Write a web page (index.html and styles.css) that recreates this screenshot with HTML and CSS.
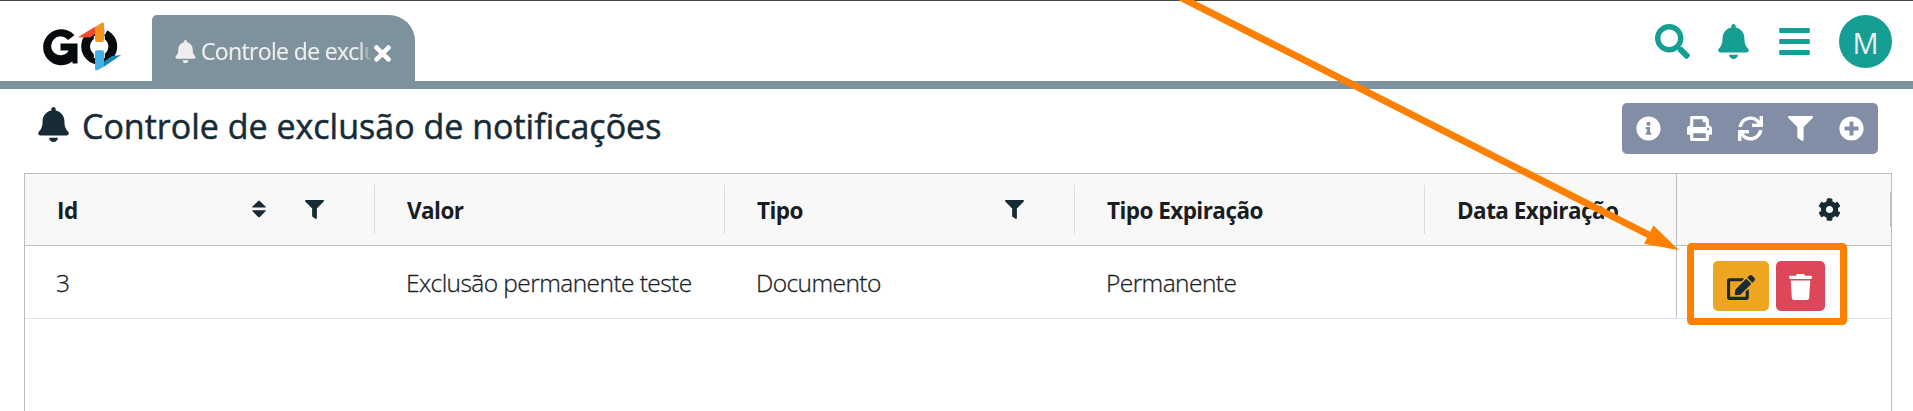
FILE: index.html
```html
<!DOCTYPE html>
<html lang="pt-BR">
<head>
<meta charset="utf-8">
<title>Controle de exclusão de notificações</title>
<link rel="stylesheet" href="styles.css">
</head>
<body>
<svg class="sprite" aria-hidden="true">
  <symbol id="bell" viewBox="0 0 448 512"><path d="M224 512c35.32 0 63.97-28.65 63.97-64H160.03c0 35.35 28.65 64 63.97 64zm215.39-149.71c-19.32-20.76-55.47-51.99-55.47-154.29 0-77.7-54.48-139.9-127.94-155.16V32c0-17.67-14.32-32-31.98-32s-31.98 14.33-31.98 32v20.84C118.56 68.1 64.08 130.3 64.08 208c0 102.3-36.15 133.53-55.47 154.29-6 6.45-8.66 14.16-8.61 21.71.11 16.4 12.98 32 32.1 32h383.8c19.12 0 32-15.6 32.1-32 .05-7.55-2.61-15.27-8.61-21.71z"/></symbol>
  <symbol id="filter" viewBox="0 0 512 512"><path d="M487.976 0H24.028C2.71 0-8.047 25.866 7.058 40.971L192 225.941V432c0 7.831 3.821 15.17 10.237 19.662l80 55.98C298.02 518.69 320 507.493 320 487.98V225.941l184.947-184.97C520.021 25.896 509.338 0 487.976 0z"/></symbol>
  <symbol id="info" viewBox="0 0 512 512"><path d="M256 8C119.043 8 8 119.083 8 256c0 136.997 111.043 248 248 248s248-111.003 248-248C504 119.083 392.957 8 256 8zm0 110c23.196 0 42 18.804 42 42s-18.804 42-42 42-42-18.804-42-42 18.804-42 42-42zm56 254c0 6.627-5.373 12-12 12h-88c-6.627 0-12-5.373-12-12v-24c0-6.627 5.373-12 12-12h12v-64h-12c-6.627 0-12-5.373-12-12v-24c0-6.627 5.373-12 12-12h64c6.627 0 12 5.373 12 12v100h12c6.627 0 12 5.373 12 12v24z"/></symbol>
  <symbol id="plus" viewBox="0 0 512 512"><path d="M256 8C119 8 8 119 8 256s111 248 248 248 248-111 248-248S393 8 256 8zm144 276c0 6.6-5.4 12-12 12h-92v92c0 6.6-5.4 12-12 12h-56c-6.6 0-12-5.4-12-12v-92h-92c-6.6 0-12-5.4-12-12v-56c0-6.6 5.4-12 12-12h92v-92c0-6.6 5.4-12 12-12h56c6.6 0 12 5.4 12 12v92h92c6.6 0 12 5.4 12 12v56z"/></symbol>
  <symbol id="print" viewBox="0 0 512 512"><path d="M448 192V77.25c0-8.49-3.37-16.62-9.37-22.63L393.37 9.37c-6-6-14.14-9.37-22.63-9.37H96C78.33 0 64 14.33 64 32v160c-35.35 0-64 28.65-64 64v112c0 8.84 7.16 16 16 16h48v96c0 17.67 14.33 32 32 32h320c17.67 0 32-14.33 32-32v-96h48c8.84 0 16-7.16 16-16V256c0-35.35-28.65-64-64-64zm-64 256H128v-96h256v96zm0-224H128V64h192v48c0 8.84 7.16 16 16 16h48v96zm48 72c-13.25 0-24-10.75-24-24 0-13.26 10.75-24 24-24s24 10.74 24 24c0 13.25-10.75 24-24 24z"/></symbol>
  <symbol id="sync" viewBox="0 0 512 512"><path d="M440.65 12.57l4 82.77A247.16 247.16 0 0 0 255.83 8C134.73 8 33.91 94.92 12.29 209.82A12 12 0 0 0 24.09 224h49.05a12 12 0 0 0 11.67-9.26 175.91 175.91 0 0 1 317-56.94l-101.46-4.86a12 12 0 0 0-12.57 12v47.41a12 12 0 0 0 12 12H500a12 12 0 0 0 12-12V12a12 12 0 0 0-12-12h-47.37a12 12 0 0 0-11.98 12.57zM255.83 432a175.61 175.61 0 0 1-146-77.8l101.8 4.87a12 12 0 0 0 12.57-12v-47.4a12 12 0 0 0-12-12H12a12 12 0 0 0-12 12V500a12 12 0 0 0 12 12h47.35a12 12 0 0 0 12-12.6l-4.15-82.57A247.17 247.17 0 0 0 255.83 504c121.11 0 221.93-86.92 243.55-201.82a12 12 0 0 0-11.8-14.18h-49.05a12 12 0 0 0-11.67 9.26A175.86 175.86 0 0 1 255.83 432z"/></symbol>
  <symbol id="search" viewBox="0 0 512 512"><path d="M505 442.7L405.3 343c-4.5-4.5-10.6-7-17-7H372c27.6-35.3 44-79.7 44-128C416 93.1 322.9 0 208 0S0 93.1 0 208s93.1 208 208 208c48.3 0 92.7-16.4 128-44v16.3c0 6.4 2.5 12.5 7 17l99.7 99.7c9.4 9.4 24.6 9.4 33.9 0l28.3-28.3c9.4-9.4 9.4-24.6.1-34zM208 336c-70.7 0-128-57.2-128-128 0-70.7 57.2-128 128-128 70.7 0 128 57.2 128 128 0 70.7-57.2 128-128 128z"/></symbol>
  <symbol id="bars" viewBox="0 0 448 512"><rect y="60" width="448" height="72" rx="14"/><rect y="220" width="448" height="72" rx="14"/><rect y="380" width="448" height="72" rx="14"/></symbol>
  <symbol id="times" viewBox="0 80 352 352"><path d="M242.72 256l100.07-100.07c12.28-12.28 12.28-32.19 0-44.48l-22.24-22.24c-12.28-12.28-32.19-12.28-44.48 0L176 189.28 75.93 89.21c-12.28-12.28-32.19-12.28-44.48 0L9.21 111.45c-12.28 12.28-12.28 32.19 0 44.48L109.28 256 9.21 356.07c-12.28 12.28-12.28 32.19 0 44.48l22.24 22.24c12.28 12.28 32.2 12.28 44.48 0L176 322.72l100.07 100.07c12.28 12.28 32.2 12.28 44.48 0l22.24-22.24c12.28-12.28 12.28-32.19 0-44.48L242.72 256z"/></symbol>
  <symbol id="sort" viewBox="0 0 14 18"><path d="M.6 7.5Q-.2 7.5.5 6.6L6.2.9Q7 .2 7.800.9L13.500 6.600Q14.200 7.500 13.400 7.500ZM.6 10.300Q-.2 10.300.5 11.200L6.200 17Q7 17.700 7.800 17L13.500 11.200Q14.200 10.300 13.400 10.300Z"/></symbol>
  <symbol id="cog" viewBox="0 0 512 512"><path d="M487.4 315.7l-42.600-24.600c4.300-23.200 4.300-47 0-70.200l42.600-24.600c4.900-2.800 7.100-8.600 5.500-14-11.100-35.600-30-67.800-54.700-94.600-3.800-4.100-10-5.100-14.800-2.300L380.800 110c-17.900-15.400-38.500-27.300-60.800-35.100V25.800c0-5.600-3.900-10.500-9.400-11.700-36.700-8.200-74.300-7.800-109.200 0-5.500 1.200-9.400 6.100-9.400 11.700V75c-22.200 7.900-42.800 19.800-60.800 35.100L88.700 85.500c-4.900-2.800-11-1.900-14.800 2.300-24.700 26.700-43.600 58.900-54.700 94.600-1.700 5.400.6 11.200 5.500 14L67.300 221c-4.300 23.200-4.300 47 0 70.200l-42.600 24.600c-4.900 2.800-7.100 8.600-5.500 14 11.100 35.600 30 67.800 54.700 94.600 3.800 4.100 10 5.100 14.800 2.300l42.600-24.600c17.900 15.400 38.500 27.300 60.800 35.100v49.200c0 5.600 3.900 10.500 9.400 11.700 36.700 8.200 74.300 7.800 109.200 0 5.500-1.200 9.400-6.100 9.400-11.700v-49.200c22.200-7.900 42.800-19.800 60.800-35.100l42.600 24.600c4.900 2.800 11 1.900 14.800-2.300 24.700-26.700 43.600-58.900 54.700-94.600 1.500-5.500-.7-11.300-5.600-14.100zM256 336c-44.100 0-80-35.900-80-80s35.900-80 80-80 80 35.900 80 80-35.900 80-80 80z"/></symbol>
  <symbol id="edit" viewBox="0 0 576 512"><path d="M402.600 83.200l90.200 90.200c3.800 3.800 3.800 10 0 13.800L274.400 405.600l-92.800 10.300c-12.400 1.400-22.900-9.100-21.500-21.500l10.300-92.800L388.800 83.200c3.800-3.800 10-3.800 13.800 0zm162-22.900l-48.800-48.800c-15.200-15.200-39.900-15.200-55.200 0l-35.400 35.400c-3.800 3.800-3.800 10 0 13.800l90.200 90.200c3.800 3.800 10 3.800 13.800 0l35.400-35.400c15.200-15.300 15.200-40 0-55.200zM384 346.200V448H64V128h229.800c3.200 0 6.200-1.300 8.500-3.500l40-40c7.600-7.600 2.200-20.500-8.500-20.500H48C21.500 64 0 85.500 0 112v352c0 26.500 21.500 48 48 48h352c26.500 0 48-21.500 48-48V306.200c0-10.700-12.900-16-20.500-8.500l-40 40c-2.200 2.300-3.500 5.300-3.500 8.500z"/></symbol>
  <symbol id="trash" viewBox="0 0 448 512"><path d="M432 32H312l-9.400-18.700A24 24 0 0 0 281.100 0H166.800a23.720 23.720 0 0 0-21.400 13.300L136 32H16A16 16 0 0 0 0 48v32a16 16 0 0 0 16 16h416a16 16 0 0 0 16-16V48a16 16 0 0 0-16-16zM53.200 467a48 48 0 0 0 47.900 45h245.800a48 48 0 0 0 47.900-45L416 128H32z"/></symbol>
</svg>

<header class="topbar">
  <svg class="logo" viewBox="0 0 80 50" role="img" aria-label="GO">
    <path d="M31.500 13.200A18 18 0 1 0 29.500 39.200V41.500H34.500V21.500H17.500V28.500H25.700A9.400 9.400 0 1 1 25 18Z" fill="#050a0c"/>
    <circle cx="56.200" cy="24.400" r="13.600" fill="none" stroke="#050a0c" stroke-width="8.800"/>
    <path d="M50.800 14H61.800V36H50.800Z" fill="#fff"/>
    <path d="M52.500 4.500 34.800 15.200 47 15.500 52.500 12Z" fill="#ee4b2b"/>
    <path d="M60.500 40 69 34 78.200 33 60.500 45Z" fill="#1b86b8"/>
    <path d="M52 6Q52 5 53 4.400L58.800.8Q61-.2 61 2V17.800Q61 20 59 20H54Q52 20 52 17.800Z" fill="#f7941e"/>
    <path d="M52 30.500Q52 28.300 54 28.300H59Q61 28.300 61 30.500V44.500L55 48Q52 49.200 52 46.500Z" fill="#41b0e4"/>
    <path d="M61.200 5.500 64.200 8.500 61.200 14Z" fill="#fff"/>
  </svg>
  <div class="tab">
    <svg class="tab-bell"><use href="#bell"/></svg>
    <span class="tab-label">Controle de exclusão</span>
    <svg class="tab-close"><use href="#times"/></svg>
  </div>
  <nav class="top-actions">
    <svg class="i-search"><use href="#search"/></svg>
    <svg class="i-tall"><use href="#bell"/></svg>
    <svg class="i-tall"><use href="#bars"/></svg>
    <span class="avatar">M</span>
  </nav>
</header>

<section class="page-head">
  <svg class="title-bell"><use href="#bell"/></svg>
  <h1>Controle de exclusão de notificações</h1>
  <div class="toolbar">
    <svg><use href="#info"/></svg>
    <svg><use href="#print"/></svg>
    <svg><use href="#sync"/></svg>
    <svg><use href="#filter"/></svg>
    <svg><use href="#plus"/></svg>
  </div>
</section>

<main class="grid">
  <div class="row head">
    <div class="cell"><span>Id</span><svg class="sort"><use href="#sort"/></svg><svg class="filter"><use href="#filter"/></svg></div>
    <div class="cell"><span>Valor</span></div>
    <div class="cell"><span>Tipo</span><svg class="filter"><use href="#filter"/></svg></div>
    <div class="cell"><span>Tipo Expiração</span></div>
    <div class="cell"><span>Data Expiração</span></div>
    <div class="pinned"><svg class="cog"><use href="#cog"/></svg><i class="handle"></i></div>
  </div>
  <div class="row body">
    <div class="cell"><span>3</span></div>
    <div class="cell"><span>Exclusão permanente teste</span></div>
    <div class="cell"><span>Documento</span></div>
    <div class="cell"><span>Permanente</span></div>
    <div class="cell"></div>
    <div class="pinned">
      <button class="btn edit" aria-label="Editar"><svg><use href="#edit"/></svg></button>
      <button class="btn del" aria-label="Excluir"><svg><use href="#trash"/></svg></button>
    </div>
  </div>
</main>

<svg class="callout" viewBox="0 0 1913 411" aria-hidden="true">
  <path d="M1176-5 1655 238" stroke="#ff8000" stroke-width="7"/>
  <path d="M1653.500 225.500 1679 250.300 1644 243.700Z" fill="#ff8000"/>
  <rect x="1690.500" y="246.500" width="153" height="75" rx="1" fill="none" stroke="#ff8000" stroke-width="7" stroke-linejoin="round"/>
</svg>
</body>
</html>
```
FILE: styles.css
```css
* { box-sizing: border-box; }
body {
  margin: 0;
  height: 411px;
  overflow: hidden;
  position: relative;
  background: #fff;
  color: #172b36;
  font-family: "Open Sans", "Noto Sans", sans-serif;
}
svg { display: block; flex: none; fill: currentColor; }
.sprite { display: none; }

.topbar {
  display: flex;
  height: 89px;
  border-top: 1px solid #444;
  border-bottom: 8px solid #7e929d;
}
.logo { width: 80px; height: 50px; margin: 21px 0 0 43px; }
.tab {
  display: flex;
  align-items: center;
  width: 263px;
  height: 66px;
  margin: 14px 0 0 29px;
  padding: 6px 23px 0;
  background: #7e929d;
  border-radius: 5px 26px 0 0;
  color: #eee;
}
.tab-bell { width: 21px; height: 23px; }
.tab-label {
  width: 171px;
  margin-left: 5px;
  overflow: hidden;
  white-space: nowrap;
  font-size: 23px;
  line-height: 32px;
  letter-spacing: -0.65px;
  -webkit-text-stroke: 0.2px currentColor;
  -webkit-mask-image: linear-gradient(90deg, #000 158px, transparent 171px);
  mask-image: linear-gradient(90deg, #000 158px, transparent 171px);
}
.tab-close { width: 17px; height: 17px; margin: 4px 0 0 2px; color: #fff; }
.top-actions {
  display: flex;
  align-items: flex-start;
  margin-left: auto;
  padding: 14px 21px 0 0;
  color: #149e94;
}
.i-search { width: 35px; height: 35px; margin: 9px 28px 0 0; }
.i-tall { width: 31px; height: 35px; margin: 9px 30px 0 0; }
.avatar {
  width: 53px;
  height: 53px;
  margin-left: -1px;
  border-radius: 50%;
  background: #149e94;
  color: #eee;
  font-size: 29px;
  line-height: 55px;
  text-align: center;
}

.page-head { display: flex; height: 84px; padding: 14px 35px 0 38px; }
.title-bell { width: 31px; height: 35px; margin-top: 4px; }
h1 {
  margin: 1px 0 0 13px;
  font-size: 34px;
  font-weight: 500;
  line-height: 44px;
  letter-spacing: 0;
  white-space: nowrap;
  -webkit-text-stroke: 0.5px currentColor;
}
.toolbar {
  display: flex;
  align-items: center;
  justify-content: space-between;
  width: 256px;
  height: 51px;
  margin-left: auto;
  padding: 0 14px;
  border-radius: 5px;
  background: #818ea5;
  color: #fff;
}
.toolbar svg { width: 25px; height: 25px; }

.grid {
  width: 1868px;
  height: 238px;
  margin-left: 24px;
  border: 1px solid #babfc7;
  border-bottom: 0;
}
.row {
  display: grid;
  grid-template-columns: 350px 350px 350px 350px 251px 215px;
  height: 73px;
  border-bottom: 1px solid #dde2eb;
}
.head { height: 72px; background: #f8f8f8; border-color: #babfc7; font-weight: 700; font-size: 22.500px; color: #181d1f; }
.body { font-size: 24.500px; font-weight: 300; color: #181d1f; letter-spacing: -0.57px; -webkit-text-stroke: 0.3px currentColor; }
.cell { display: flex; align-items: center; padding-left: 32px; position: relative; white-space: nowrap; }
.body .cell { padding-left: 31px; }
.head .cell { padding-top: 2px; letter-spacing: -0.55px; }
.head .cell + .cell::before {
  content: "";
  position: absolute;
  left: -1px;
  top: 11px;
  width: 1px;
  height: 49px;
  background: #dbdde2;
}
.head svg { color: #172b36; margin-bottom: 3px; }
.sort { width: 14px; height: 18px; margin-left: auto; }
.filter { width: 19px; height: 19px; margin-right: 51px; margin-left: auto; }
.sort + .filter { margin-left: 39px; }
.pinned { display: flex; border-left: 1px solid #babfc7; position: relative; }
.head .cog { width: 23px; height: 23px; margin: 24px 0 0 141px; }
.handle { position: absolute; right: 0; top: 18px; width: 1px; height: 35px; background: #babfc7; }
.btn {
  display: flex;
  align-items: center;
  justify-content: center;
  height: 50px;
  margin-top: 15px;
  padding: 2px 0 0;
  border: 0;
  border-radius: 5px;
}
.edit { width: 56px; margin-left: 36px; background: #eea522; color: #172b36; }
.edit svg { width: 28px; height: 25px; }
.del { width: 49px; margin-left: 7px; background: #de475a; color: #fff; }
.del svg { width: 23px; height: 26px; }
.callout { position: absolute; left: 0; top: 0; width: 1913px; height: 411px; pointer-events: none; }
```
